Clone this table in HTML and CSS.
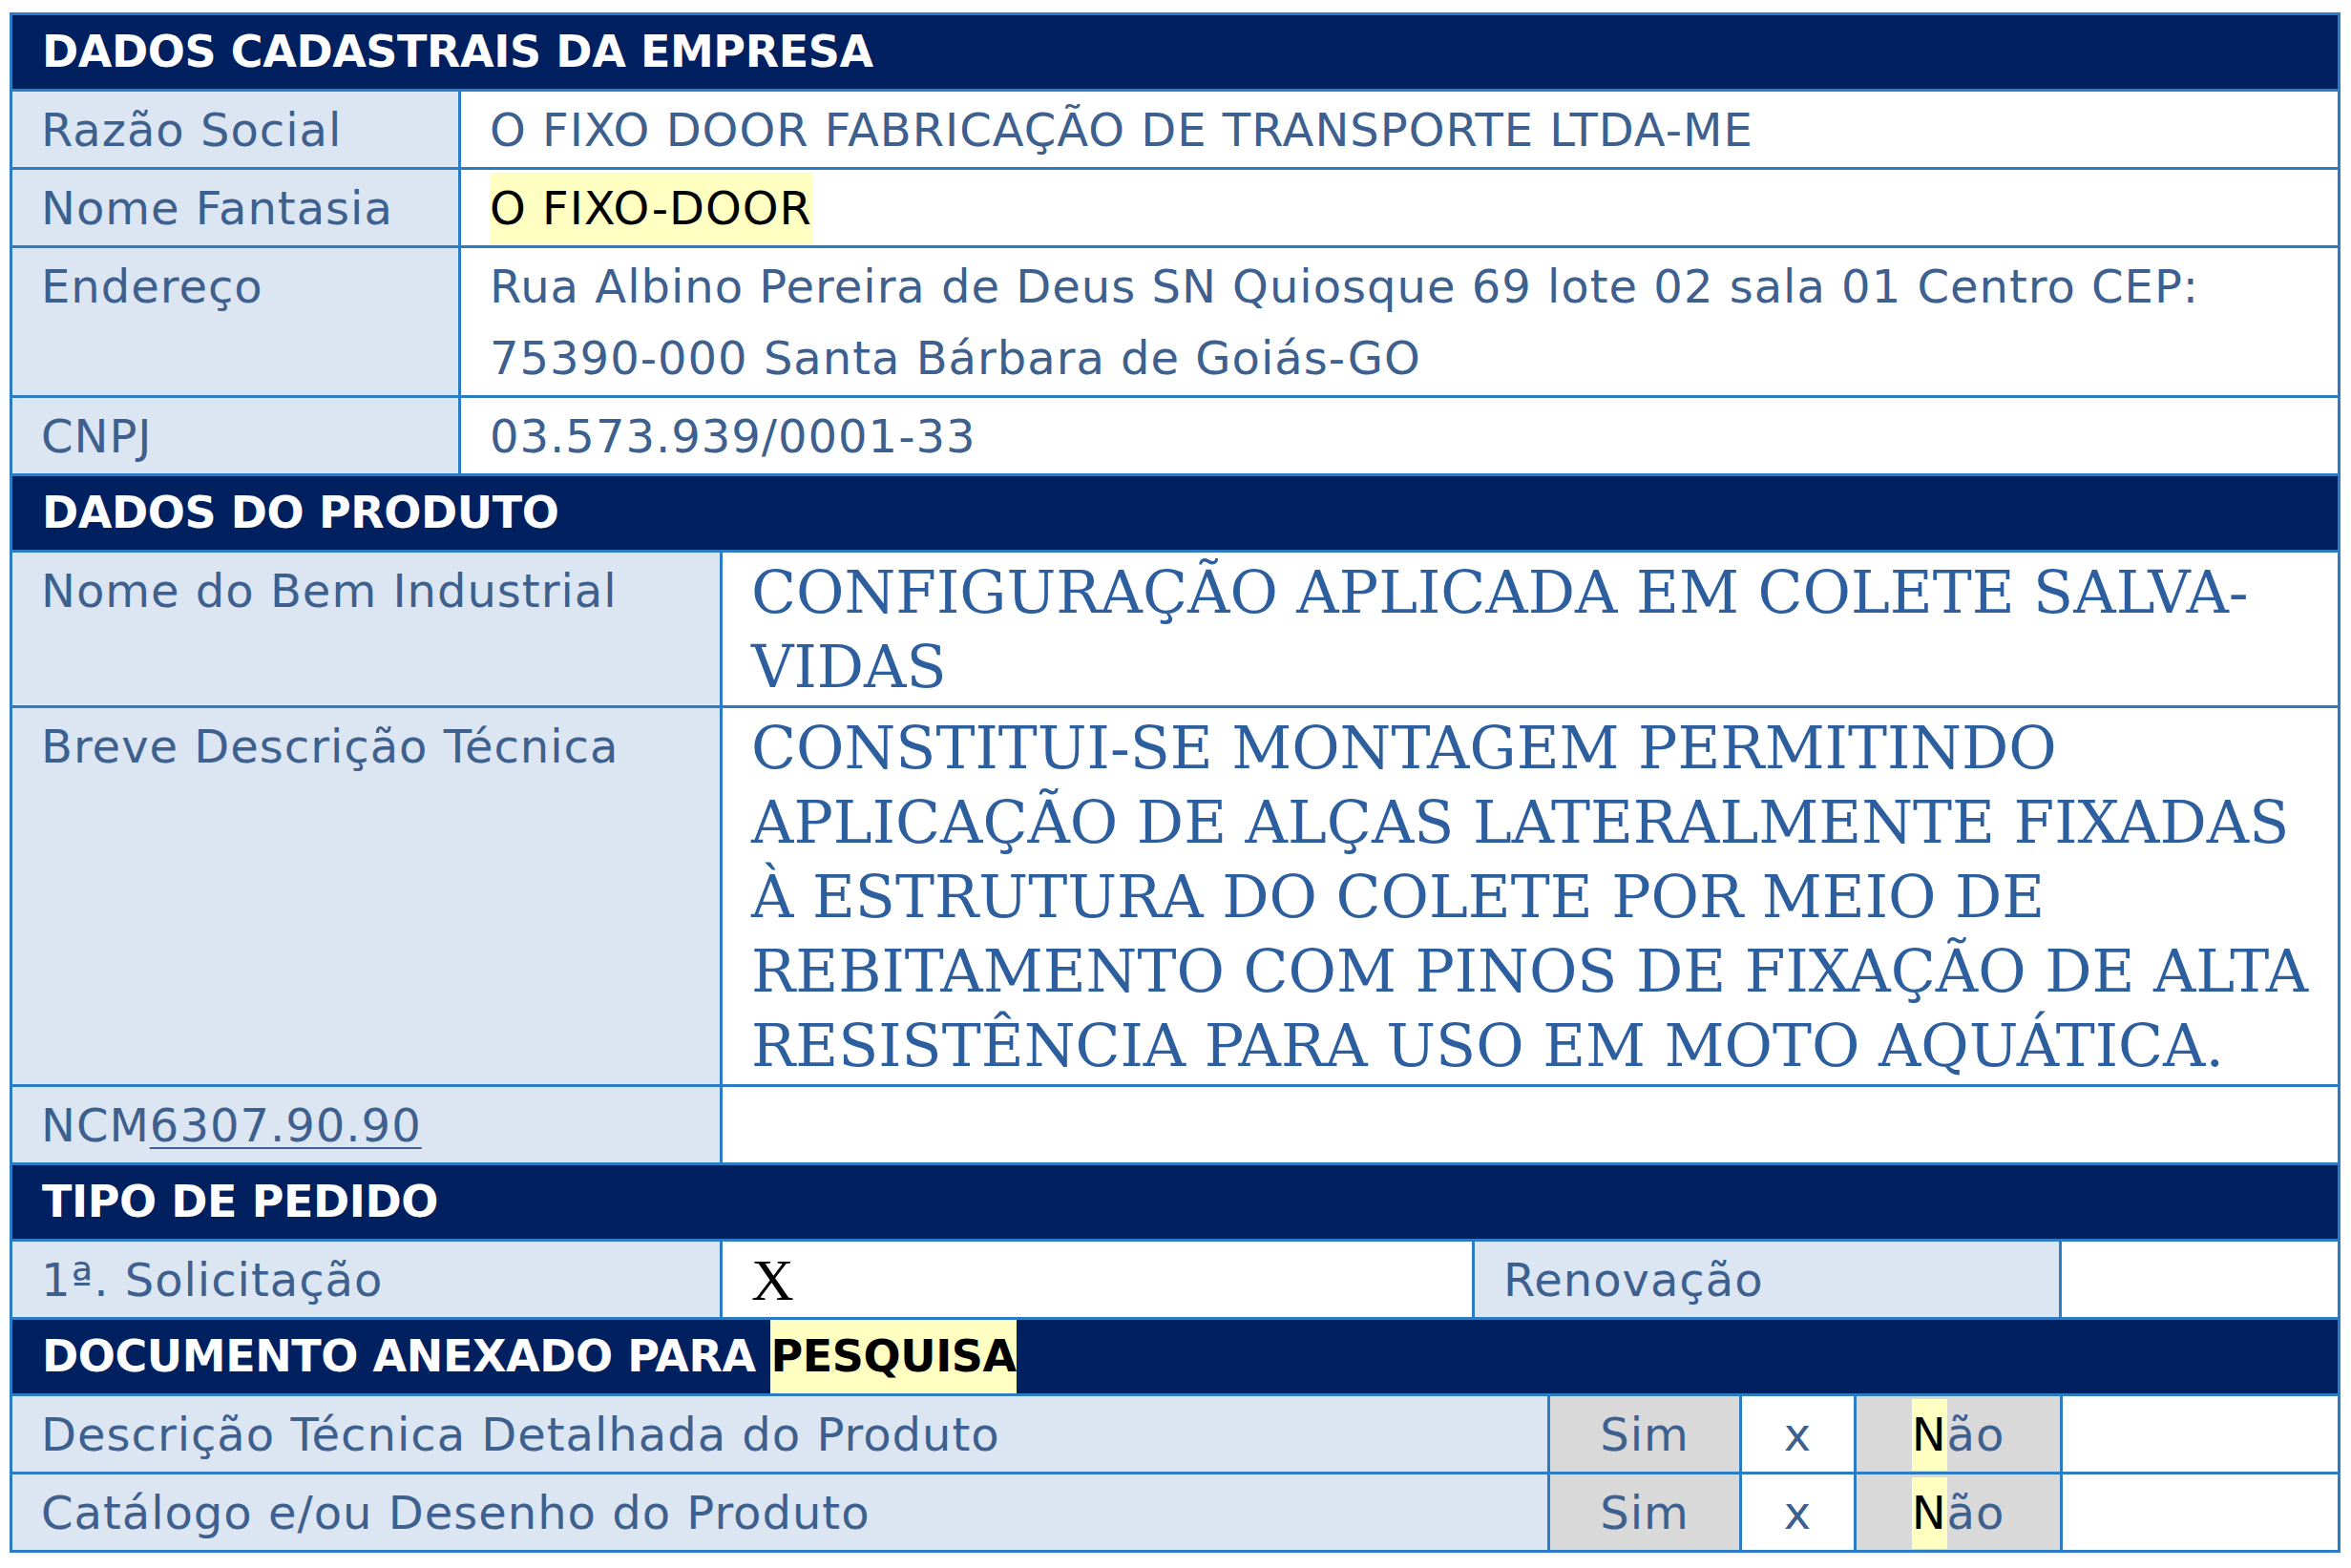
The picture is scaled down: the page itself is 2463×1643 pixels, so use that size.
FILE: index.html
```html
<!DOCTYPE html>
<html lang="pt-BR">
<head>
  <meta charset="UTF-8">
  <title>Dados cadastrais</title>
  <link rel="stylesheet" href="styles.css">
</head>
<body>

  <div class="sheet">

    <div class="row head">DADOS CADASTRAIS DA EMPRESA</div>

    <div class="row cols-cad">
      <div class="cell label">Razão Social</div>
      <div class="cell">O FIXO DOOR FABRICAÇÃO DE TRANSPORTE LTDA-ME</div>
    </div>
    <div class="row cols-cad">
      <div class="cell label">Nome Fantasia</div>
      <div class="cell"><span class="mark">O FIXO-DOOR</span></div>
    </div>
    <div class="row cols-cad">
      <div class="cell label">Endereço</div>
      <div class="cell">Rua Albino Pereira de Deus SN Quiosque 69 lote 02 sala 01 Centro CEP: 75390-000 Santa Bárbara de Goiás-GO</div>
    </div>
    <div class="row cols-cad">
      <div class="cell label">CNPJ</div>
      <div class="cell">03.573.939/0001-33</div>
    </div>

    <div class="row head">DADOS DO PRODUTO</div>

    <div class="row cols-prod">
      <div class="cell label">Nome do Bem Industrial</div>
      <div class="cell serif">CONFIGURAÇÃO APLICADA EM COLETE SALVA-VIDAS</div>
    </div>
    <div class="row cols-prod">
      <div class="cell label">Breve Descrição Técnica</div>
      <div class="cell serif">CONSTITUI-SE MONTAGEM PERMITINDO APLICAÇÃO DE ALÇAS LATERALMENTE FIXADAS À ESTRUTURA DO COLETE POR MEIO DE REBITAMENTO COM PINOS DE FIXAÇÃO DE ALTA RESISTÊNCIA PARA USO EM MOTO AQUÁTICA.</div>
    </div>
    <div class="row cols-prod">
      <div class="cell label">NCM<u>6307.90.90</u></div>
      <div class="cell"></div>
    </div>

    <div class="row head">TIPO DE PEDIDO</div>

    <div class="row cols-tipo">
      <div class="cell label">1ª. Solicitação</div>
      <div class="cell check">X</div>
      <div class="cell label">Renovação</div>
      <div class="cell"></div>
    </div>

    <div class="row head">DOCUMENTO ANEXADO PARA <span class="mark">PESQUISA</span></div>

    <div class="row cols-doc">
      <div class="cell label">Descrição Técnica Detalhada do Produto</div>
      <div class="cell opt">Sim</div>
      <div class="cell center">x</div>
      <div class="cell opt"><span class="mark">N</span>ão</div>
      <div class="cell"></div>
    </div>
    <div class="row cols-doc">
      <div class="cell label">Catálogo e/ou Desenho do Produto</div>
      <div class="cell opt">Sim</div>
      <div class="cell center">x</div>
      <div class="cell opt"><span class="mark">N</span>ão</div>
      <div class="cell"></div>
    </div>

  </div>

</body>
</html>
```

FILE: styles.css
```css
* {
  box-sizing: border-box;
}

body {
  margin: 0;
  padding: 13px 0 0 10px;
  background: #fff;
  font-family: "DejaVu Sans", Lato, sans-serif;
  color: #3d608e;
}

.sheet {
  width: 2442px;
  border: 3px solid #2c7bc5;
}

.row {
  display: grid;
  border-top: 3px solid #2c7bc5;
}

.row:first-child {
  border-top: none;
}

.cols-cad {
  grid-template-columns: 467px 1fr;
}

.cols-prod {
  grid-template-columns: 741px 1fr;
}

.cols-tipo {
  grid-template-columns: 741px 788px 615px 1fr;
}

.cols-doc {
  grid-template-columns: 1608px 201px 120px 216px 1fr;
}

.head {
  display: block;
  background: #002060;
  color: #fff;
  font-weight: bold;
  font-size: 46px;
  letter-spacing: -0.4px;
  line-height: 77px;
  padding: 0 31px;
}

.cell {
  font-size: 48px;
  letter-spacing: 1px;
  line-height: 75px;
  padding: 3px 30px 1px 30px;
  min-height: 79px;
}

.cell + .cell {
  border-left: 3px solid #2c7bc5;
}

.label {
  background: #dce6f2;
}

.serif {
  font-family: "DejaVu Serif", "Liberation Serif", serif;
  font-size: 61.5px;
  letter-spacing: 0;
  line-height: 78px;
  color: #2d5f9f;
  padding: 3px 30px 1px 30px;
}

.check {
  font-family: "Liberation Serif", "Times New Roman", serif;
  font-size: 62px;
  letter-spacing: 0;
  color: #000;
}

.opt {
  background: #d9d9d9;
  text-align: center;
}

.center {
  text-align: center;
}

.mark {
  display: inline-block;
  background: #ffffc2;
  color: #000;
}

u {
  text-decoration-thickness: 2px;
  text-underline-offset: 6px;
}
```
